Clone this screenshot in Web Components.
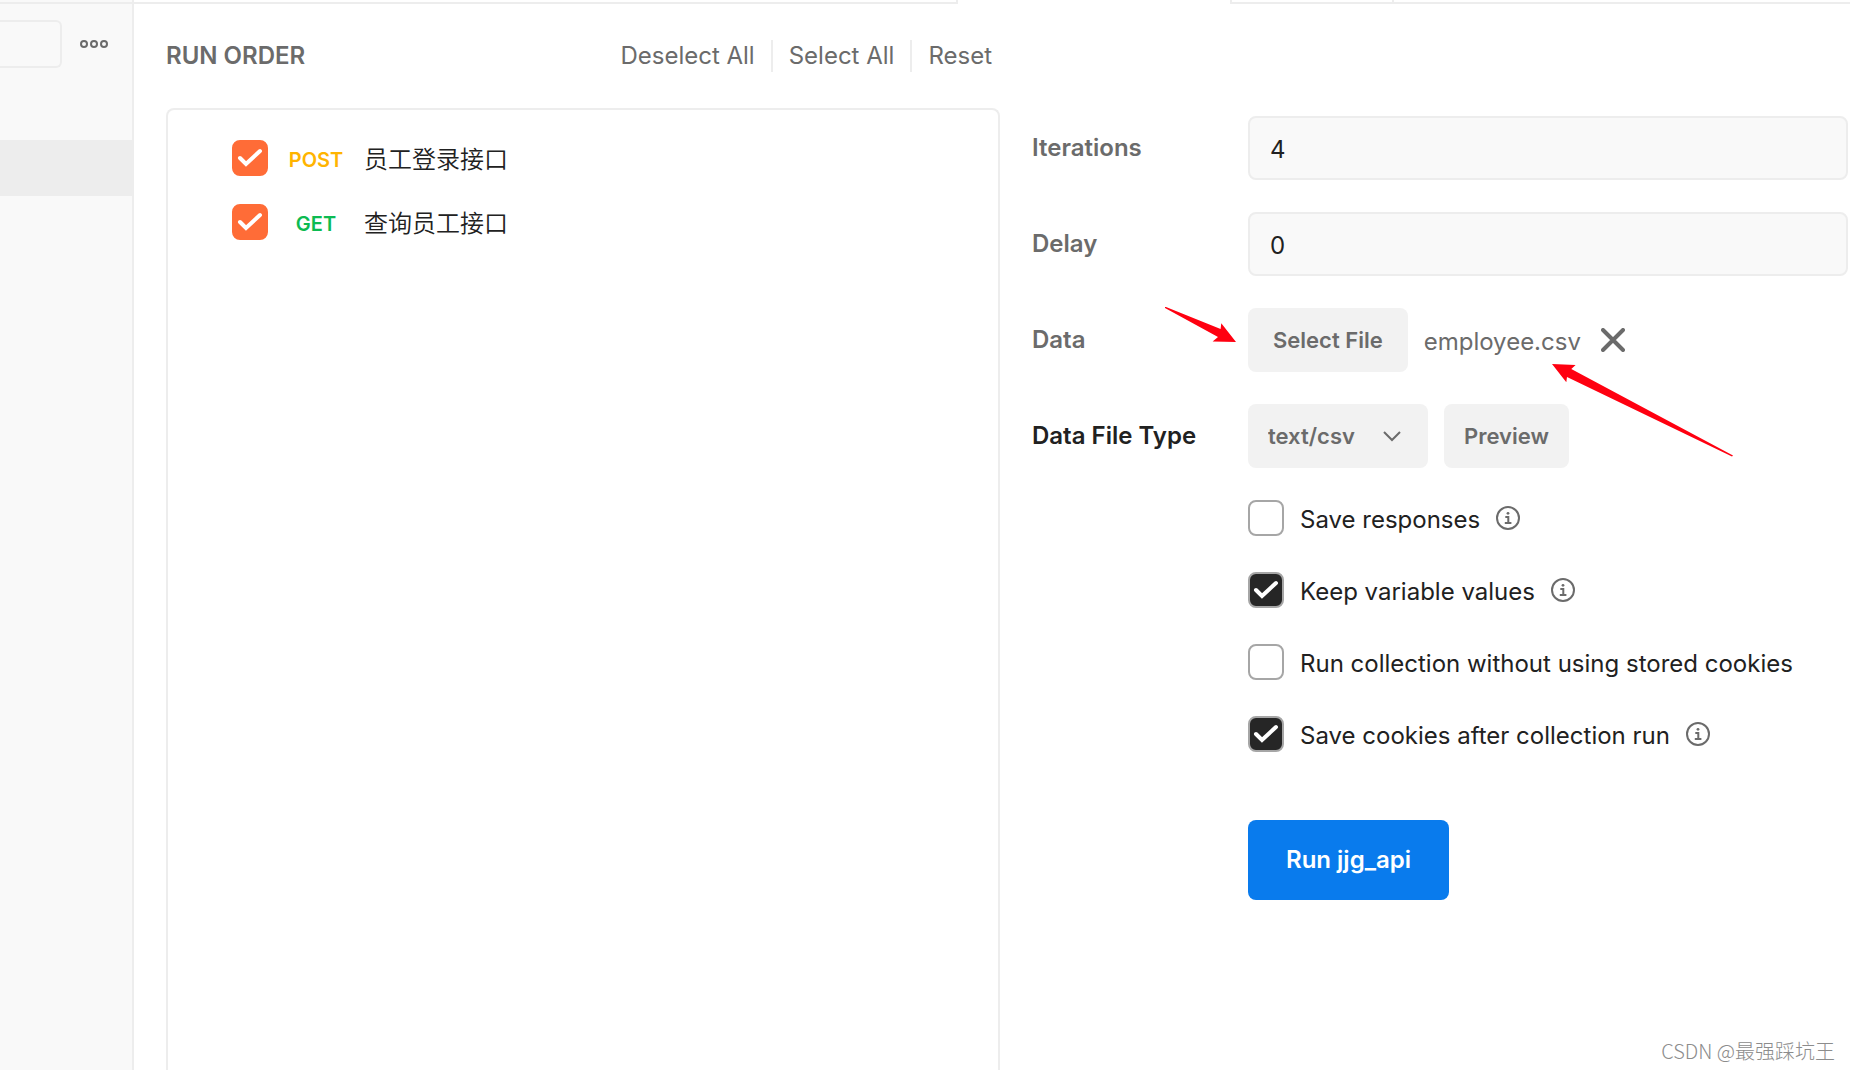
<!DOCTYPE html>
<html lang="en">
<head>
<meta charset="utf-8">
<title>Collection Runner</title>
<style>
  :root {
    --line: #ededed;
    --panel: #f9f9f9;
    --button: #f2f2f2;
    --muted: #6b6b6b;
    --text: #212121;
    --accent: #ff6c37;
    --primary: #097bed;
  }

  body {
    margin: 0;
    background: #fff;
    color: var(--text);
    font: 24px/32px Inter, "Noto Sans CJK SC", sans-serif;
  }
</style>
</head>
<body>
<collection-runner></collection-runner>

<script>
function define(name, html) {
  const template = document.createElement("template");
  template.innerHTML = html;

  window.customElements.define(name, class extends HTMLElement {
    constructor() {
      super();
      this.attachShadow({ mode: "open" });
      this.shadowRoot.appendChild(template.content.cloneNode(true));
    }
  });
}

/* ---------- check box with its text ---------- */

const checkTemplate = document.createElement("template");

checkTemplate.innerHTML = `
<style>
  :host {
    display: flex;
    align-items: center;
    gap: 16px;
  }
  label {
    display: flex;
    align-items: center;
    gap: var(--check-gap, 16px);
  }
  .box {
    display: grid;
    flex: none;
  }
  .box > * {
    grid-area: 1 / 1;
  }
  .text {
    display: flex;
    align-items: center;
    padding-top: 4px;
  }
  input {
    appearance: none;
    box-sizing: border-box;
    width: 36px;
    height: 36px;
    margin: 0;
    border: 2px solid var(--check-border, #a6a6a6);
    border-radius: 8px;
    background: #fff;
  }
  input:checked {
    background: var(--check-color, #262626);
  }
  svg {
    width: 36px;
    height: 36px;
    fill: none;
    stroke: #fff;
    stroke-width: 4;
    stroke-linecap: round;
    pointer-events: none;
  }
  input:not(:checked) + svg {
    display: none;
  }
</style>
<label>
  <span class="box">
    <input type="checkbox">
    <svg viewBox="0 0 36 36"><path d="M8 18l6 6 14-13"/></svg>
  </span>
  <span class="text"><slot></slot></span>
</label>
<slot name="info"></slot>
`;

class CheckOption extends HTMLElement {
  constructor() {
    super();
    this.attachShadow({ mode: "open" });
    this.shadowRoot.appendChild(checkTemplate.content.cloneNode(true));
    this.shadowRoot.querySelector("input").checked = this.hasAttribute("checked");
  }
}

window.customElements.define("check-option", CheckOption);

define("info-icon", `
<style>
  :host {
    display: block;
    height: 24px;
    color: var(--muted);
  }
  svg {
    display: block;
    width: 24px;
    height: 24px;
  }
</style>
<svg viewBox="0 0 24 24">
  <circle cx="12" cy="12" r="11" fill="none" stroke="currentColor" stroke-width="2"/>
  <circle cx="12" cy="7.3" r="1.4" fill="currentColor"/>
  <path d="M9.3 11h3v6M8.8 17h6.6" fill="none" stroke="currentColor" stroke-width="2"/>
</svg>
`);

/* ---------- request in the run order ---------- */

const requestTemplate = document.createElement("template");

requestTemplate.innerHTML = `
<style>
  :host {
    display: flex;
    align-items: center;
    height: 64px;
    padding-left: 64px;
    font-family: Inter, "Noto Sans CJK SC DemiLight", "Noto Sans CJK SC", sans-serif;
    font-weight: 350;
  }
  check-option {
    --check-color: var(--accent);
    --check-border: var(--accent);
    --check-gap: 0;
  }
  .method {
    width: 96px;
    text-align: center;
    font-size: 20px;
    font-weight: 600;
    color: #ffb400;
  }
  :host([method="GET"]) .method {
    color: #0cbb52;
  }
</style>
<check-option checked><span class="method"></span><slot></slot></check-option>
`;

class RequestItem extends HTMLElement {
  constructor() {
    super();
    this.attachShadow({ mode: "open" });
    this.shadowRoot.appendChild(requestTemplate.content.cloneNode(true));
    this.shadowRoot.querySelector(".method").textContent = this.getAttribute("method");
  }
}

window.customElements.define("request-item", RequestItem);

/* ---------- frame ---------- */

define("side-bar", `
<style>
  :host {
    display: block;
    box-sizing: border-box;
    flex: none;
    width: 134px;
    padding-top: 2px;
    border-right: 2px solid var(--line);
    background: var(--panel);
  }
  .tools {
    display: flex;
    align-items: center;
    gap: 16px;
    padding: 16px 22px 0 0;
    border-top: 2px solid var(--line);
  }
  input {
    box-sizing: border-box;
    flex: 1;
    min-width: 0;
    height: 48px;
    border: 2px solid var(--line);
    border-left: 0;
    border-radius: 0 6px 6px 0;
    background: var(--panel);
    font: inherit;
  }
  button {
    display: block;
    padding: 0;
    border: 0;
    background: none;
    color: var(--muted);
  }
  svg {
    display: block;
    width: 32px;
    height: 8px;
    fill: none;
    stroke: currentColor;
    stroke-width: 2;
  }
  .selected {
    height: 56px;
    margin-top: 72px;
    background: var(--line);
  }
</style>
<div class="tools">
  <input type="text" aria-label="Filter">
  <button type="button" aria-label="More actions">
    <svg viewBox="0 0 32 8"><circle cx="6" cy="4" r="3"/><circle cx="16" cy="4" r="3"/><circle cx="26" cy="4" r="3"/></svg>
  </button>
</div>
<div class="selected"></div>
`);

define("tab-strip", `
<style>
  :host {
    display: grid;
    grid-template-columns: 824fr 272fr 164fr 456fr;
    height: 4px;
  }
  div {
    border-bottom: 2px solid var(--line);
  }
  .open {
    border-color: transparent;
  }
  .before {
    border-right: 2px solid var(--line);
  }
  .after {
    border-left: 2px solid var(--line);
    border-right: 2px solid var(--line);
  }
</style>
<div class="before"></div><div class="open"></div><div class="after"></div><div></div>
`);

define("run-order", `
<style>
  :host {
    display: flex;
    flex-direction: column;
  }
  header {
    display: flex;
    align-items: center;
    justify-content: space-between;
    height: 104px;
    color: var(--muted);
  }
  h2 {
    margin: 0;
    font-size: 24px;
    font-weight: 600;
  }
  nav {
    display: flex;
    padding-right: 8px;
  }
  button {
    padding: 0 16px;
    border: 0;
    background: none;
    color: inherit;
    font: inherit;
  }
  button + button {
    border-left: 2px solid var(--line);
  }
  button:last-child {
    padding-right: 0;
  }
  .list {
    flex: 1;
    padding-top: 16px;
    border: 2px solid var(--line);
    border-bottom: 0;
    border-radius: 8px 8px 0 0;
  }
</style>
<header>
  <h2>RUN ORDER</h2>
  <nav>
    <button type="button">Deselect All</button>
    <button type="button">Select All</button>
    <button type="button">Reset</button>
  </nav>
</header>
<div class="list"><slot></slot></div>
`);

/* ---------- run settings ---------- */

define("form-row", `
<style>
  :host {
    display: grid;
    grid-template-columns: 216px 1fr;
    align-items: center;
    color: var(--muted);
  }
  .name {
    font-weight: 600;
  }
  .control {
    position: relative;
    display: flex;
    align-items: center;
    gap: 16px;
  }
</style>
<span class="name"><slot name="label"></slot></span>
<div class="control"><slot></slot></div>
`);

define("run-settings", `
<style>
  :host {
    display: flex;
    flex-direction: column;
    gap: 32px;
    padding-top: 112px;
  }
  input {
    box-sizing: border-box;
    width: 100%;
    height: 64px;
    padding: 2px 20px 0;
    border: 2px solid var(--line);
    border-radius: 8px;
    background: var(--panel);
    color: var(--text);
    font: inherit;
  }
  button,
  select {
    height: 64px;
    padding: 0 20px;
    border: 0;
    border-radius: 8px;
    background: var(--button);
    color: var(--muted);
    font: inherit;
    font-size: 22px;
    font-weight: 600;
  }
  .file {
    padding: 0 25px;
  }
  .file-name {
    padding-top: 4px;
  }
  .clear {
    height: 24px;
    padding: 0;
    margin-left: 4px;
    background: none;
  }
  .clear svg {
    display: block;
    width: 24px;
    height: 24px;
    stroke: currentColor;
    stroke-width: 4;
    stroke-linecap: round;
  }
  .strong {
    color: var(--text);
  }
  .select {
    display: grid;
    align-items: center;
    width: 180px;
  }
  .select > * {
    grid-area: 1 / 1;
  }
  select {
    appearance: none;
    width: 100%;
  }
  .select svg {
    justify-self: end;
    width: 18px;
    height: 11px;
    margin-right: 27px;
    fill: none;
    stroke: var(--muted);
    stroke-width: 2;
    pointer-events: none;
  }
  .options {
    display: flex;
    flex-direction: column;
    gap: 36px;
    padding-left: 216px;
  }
  .run {
    align-self: flex-start;
    height: 80px;
    margin: 36px 0 0 216px;
    padding: 0 38px;
    background: var(--primary);
    color: #fff;
    font-size: 24px;
  }
  /* hand-drawn pointers lie over the form */
  .arrow {
    position: absolute;
    overflow: visible;
    fill: #ff0010;
    pointer-events: none;
  }
  .to-button {
    left: -83px;
    top: -1px;
  }
  .to-name {
    left: 304px;
    top: 56px;
  }
</style>
<form-row>
  <label slot="label" for="iterations">Iterations</label>
  <input id="iterations" type="text" inputmode="numeric" value="4">
</form-row>
<form-row>
  <label slot="label" for="delay">Delay</label>
  <input id="delay" type="text" inputmode="numeric" value="0">
</form-row>
<form-row>
  <label slot="label" for="file">Data</label>
  <button class="file" id="file" type="button">Select File</button>
  <span class="file-name">employee.csv</span>
  <button class="clear" type="button" aria-label="Remove file">
    <svg viewBox="0 0 24 24"><path d="M2 2l20 20M22 2L2 22"/></svg>
  </button>
  <svg class="arrow to-button" width="71" height="35" viewBox="0 0 71 35"><path d="M0 0L1 0 55.600 22 56.300 16.300 71 35 47.600 34.600 53 30 0 1z"/></svg>
  <svg class="arrow to-name" width="181" height="93" viewBox="0 0 181 93"><path d="M0 0L23.600 1 19.300 5 181 91.600 180 92.600 15 13 14.300 18.300z"/></svg>
</form-row>
<form-row>
  <label slot="label" class="strong" for="type">Data File Type</label>
  <span class="select">
    <select id="type"><option>text/csv</option></select>
    <svg viewBox="0 0 18 11"><path d="M1 1l8 8 8-8"/></svg>
  </span>
  <button type="button">Preview</button>
</form-row>
<div class="options">
  <check-option>Save responses<info-icon slot="info"></info-icon></check-option>
  <check-option checked>Keep variable values<info-icon slot="info"></info-icon></check-option>
  <check-option>Run collection without using stored cookies</check-option>
  <check-option checked>Save cookies after collection run<info-icon slot="info"></info-icon></check-option>
</div>
<button class="run" type="button">Run jjg_api</button>
`);

define("water-mark", `
<style>
  :host {
    position: absolute;
    right: 15px;
    bottom: 4px;
    color: #8c8c8c;
    font: 300 20px/30px "Noto Sans CJK SC", sans-serif;
    text-shadow: -1px -1px 0 #fff;
  }
</style>
<slot></slot>
`);

define("collection-runner", `
<style>
  :host {
    position: relative;
    display: flex;
    min-height: 100vh;
  }
  main {
    display: flex;
    flex: 1;
    flex-direction: column;
  }
  .columns {
    display: grid;
    flex: 1;
    grid-template-columns: 139fr 136fr;
    gap: 32px;
    padding: 0 2px 0 32px;
  }
</style>
<side-bar></side-bar>
<main>
  <tab-strip></tab-strip>
  <div class="columns">
    <run-order>
      <request-item method="POST">员工登录接口</request-item>
      <request-item method="GET">查询员工接口</request-item>
    </run-order>
    <run-settings></run-settings>
  </div>
</main>
<water-mark>CSDN @最强踩坑王</water-mark>
`);
</script>
</body>
</html>
